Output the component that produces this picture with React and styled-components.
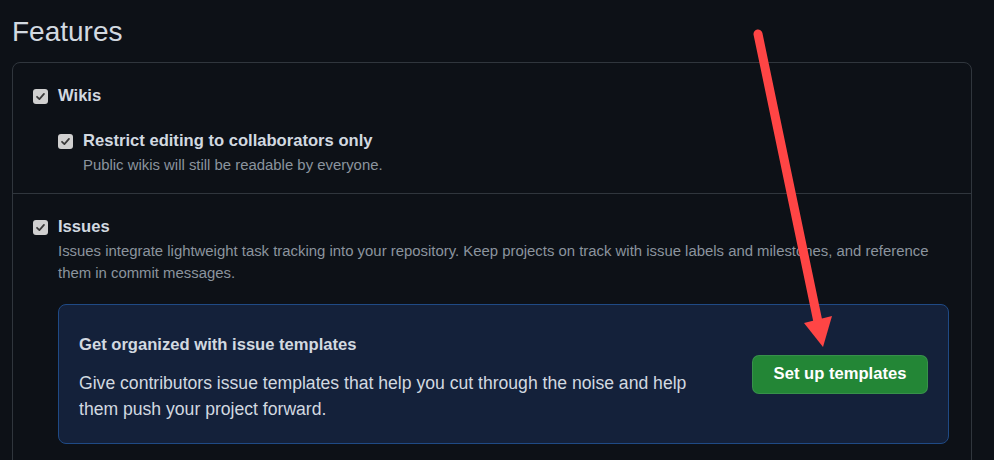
import React from 'react';
import styled, { createGlobalStyle } from 'styled-components';

const GlobalStyle = createGlobalStyle`
  html, body {
    margin: 0;
    padding: 0;
    background: #0d1117;
  }
  body {
    font-family: "Liberation Sans", Arial, sans-serif;
    color: #c9d1d9;
  }
`;

const Checkbox = () => (
  <CheckBoxWrap>
    <svg width='11' height='11' viewBox='0 0 12 12'>
      <path
        d='M2.2 6.3 L4.8 8.8 L9.8 3.2'
        fill='none'
        stroke='#3a3a3a'
        strokeWidth='1.9'
        strokeLinecap='round'
        strokeLinejoin='round'
      />
    </svg>
  </CheckBoxWrap>
);

const Arrow = () => (
  <ArrowLayer width='994' height='460' viewBox='0 0 994 460'>
    <line
      x1='758'
      y1='34'
      x2='818'
      y2='322'
      stroke='#ff4545'
      strokeWidth='9'
      strokeLinecap='round'
    />
    <polygon points='804,323 832,316 823,347' fill='#ff4545' />
  </ArrowLayer>
);

const App = () => {
  return (
    <Page>
      <GlobalStyle />
      <Title>Features</Title>
      <Box>
        <Section>
          <CheckRow>
            <Checkbox />
            <div>
              <Label>Wikis</Label>
            </div>
          </CheckRow>
          <Nested>
            <CheckRow>
              <Checkbox />
              <div>
                <Label>Restrict editing to collaborators only</Label>
                <Note>Public wikis will still be readable by everyone.</Note>
              </div>
            </CheckRow>
          </Nested>
        </Section>
        <Section>
          <CheckRow>
            <Checkbox />
            <div>
              <Label>Issues</Label>
              <Note>
                Issues integrate lightweight task tracking into your repository.
                Keep projects on track with issue labels and milestones, and
                reference them in commit messages.
              </Note>
              <Promo>
                <PromoText>
                  <PromoTitle>Get organized with issue templates</PromoTitle>
                  <PromoBody>
                    Give contributors issue templates that help you cut through
                    the noise and help
                    <br />
                    them push your project forward.
                  </PromoBody>
                </PromoText>
                <GreenButton>Set up templates</GreenButton>
              </Promo>
            </div>
          </CheckRow>
        </Section>
      </Box>
      <Arrow />
    </Page>
  );
};

export default App;

const Page = styled.div`
  position: relative;
  width: 994px;
  height: 460px;
  overflow: hidden;
  padding: 0 0 0 12px;
  box-sizing: border-box;
`;

const Title = styled.h2`
  margin: 0;
  padding-top: 14px;
  height: 62px;
  box-sizing: border-box;
  font-size: 28px;
  font-weight: 400;
  line-height: 36px;
  color: #d2d9e0;
`;

const Box = styled.div`
  width: 960px;
  border: 1px solid #30363d;
  border-radius: 8px;
  height: 420px;
  box-sizing: border-box;
`;

const Section = styled.div`
  padding: 20px 20px 17px 20px;

  & + & {
    border-top: 1px solid #30363d;
    padding-top: 20px;
  }
`;

const Nested = styled.div`
  margin-top: 19px;
  padding-left: 25px;
`;

const CheckRow = styled.div`
  display: flex;
  align-items: flex-start;
  gap: 10px;
`;

const CheckBoxWrap = styled.span`
  flex: none;
  width: 15px;
  height: 15px;
  margin-top: 6px;
  border-radius: 3px;
  background: #d0d0d0;
  display: flex;
  align-items: center;
  justify-content: center;
`;

const Label = styled.div`
  font-size: 16.6px;
  font-weight: 700;
  line-height: 26px;
  color: #d2d9e0;
`;

const Note = styled.div`
  font-size: 14.9px;
  line-height: 22px;
  color: #8b949e;
`;

const Promo = styled.div`
  margin-top: 20px;
  width: 891px;
  height: 140px;
  box-sizing: border-box;
  display: flex;
  align-items: center;
  justify-content: space-between;
  padding: 0 20px;
  background: #14213a;
  border: 1px solid #1f4a85;
  border-radius: 8px;
`;

const PromoText = styled.div`
  display: flex;
  flex-direction: column;
  gap: 12px;
  padding-top: 6px;
`;

const PromoTitle = styled.div`
  font-size: 16.6px;
  font-weight: 700;
  line-height: 26px;
  color: #d2d9e0;
`;

const PromoBody = styled.div`
  font-size: 17.6px;
  line-height: 26px;
  color: #d2d9e0;
`;

const GreenButton = styled.button`
  width: 176px;
  height: 39px;
  border: 1px solid rgba(240, 246, 252, 0.1);
  border-radius: 7px;
  background: #238636;
  color: #ffffff;
  font-family: inherit;
  font-size: 16.6px;
  font-weight: 700;
  cursor: pointer;
`;

const ArrowLayer = styled.svg`
  position: absolute;
  top: 0;
  left: 0;
  pointer-events: none;
`;
